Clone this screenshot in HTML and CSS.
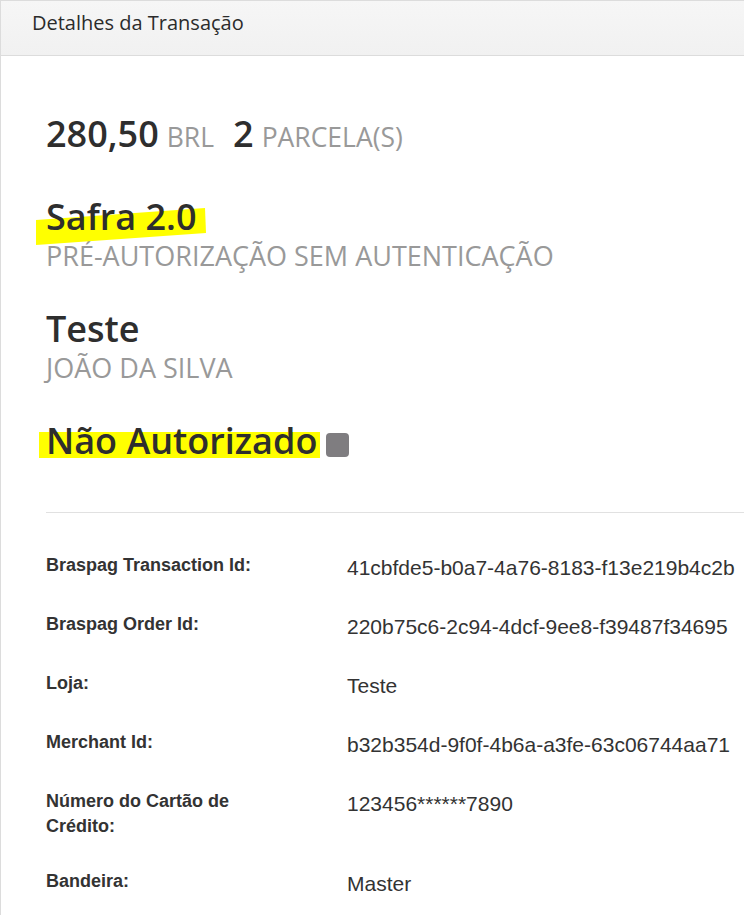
FILE: index.html
```html
<!DOCTYPE html>
<html lang="pt-BR">
<head>
<meta charset="utf-8">
<title>Detalhes da Transação</title>
<link rel="stylesheet" href="styles.css">
</head>
<body>
<div class="panel">
  <div class="panel-header">Detalhes da Transação</div>
  <div class="panel-body">
    <div class="amount">
      <span class="big">280,50</span><span class="unit">BRL</span>
      <span class="big gap">2</span><span class="unit">PARCELA(S)</span>
    </div>

    <div class="block">
      <div class="big"><span class="marked">
        <svg class="marker-safra" width="172" height="38" viewBox="0 0 172 38" aria-hidden="true"><polygon points="0,12 169,0 170,25 0,37" fill="#ffff00"/></svg>
        <span class="marked-text">Safra 2.0</span></span></div>
      <div class="sub">PRÉ-AUTORIZAÇÃO SEM AUTENTICAÇÃO</div>
    </div>

    <div class="block">
      <div class="big">Teste</div>
      <div class="sub">JOÃO DA SILVA</div>
    </div>

    <div class="block status">
      <span class="big"><span class="marked hl"><span class="marked-text">Não Autorizado</span></span></span><span class="status-box"></span>
    </div>

    <hr class="divider">

    <div class="details">
      <div class="row"><div class="label">Braspag Transaction Id:</div><div class="value">41cbfde5-b0a7-4a76-8183-f13e219b4c2b</div></div>
      <div class="row"><div class="label">Braspag Order Id:</div><div class="value">220b75c6-2c94-4dcf-9ee8-f39487f34695</div></div>
      <div class="row"><div class="label">Loja:</div><div class="value">Teste</div></div>
      <div class="row"><div class="label">Merchant Id:</div><div class="value">b32b354d-9f0f-4b6a-a3fe-63c06744aa71</div></div>
      <div class="row"><div class="label">Número do Cartão de Crédito:</div><div class="value">123456******7890</div></div>
      <div class="row"><div class="label">Bandeira:</div><div class="value">Master</div></div>
    </div>
  </div>
</div>
</body>
</html>
```

FILE: styles.css
```css
html, body {
  margin: 0;
  padding: 0;
  background: #fff;
}

body {
  font-family: "Open Sans", "Liberation Sans", sans-serif;
  color: #333;
  overflow: hidden;
}

.panel {
  border-top: 1px solid #dcdcdc;
  border-left: 1px solid #dcdcdc;
  min-height: 915px;
  box-sizing: border-box;
}

.panel-header {
  height: 55px;
  box-sizing: border-box;
  padding: 8px 31px 0;
  font-size: 20px;
  line-height: 27px;
  color: #2b2b2b;
  background: linear-gradient(#f6f6f6, #f1f1f1);
  border-bottom: 1px solid #dcdcdc;
}

.panel-body {
  padding: 57px 0 0 45px;
}

.big {
  font-size: 36px;
  font-weight: 600;
  line-height: 42px;
  color: #2e2e2e;
}

.unit {
  font-size: 26.5px;
  color: #999;
  margin-left: 8px;
}

.gap {
  margin-left: 19px;
}

.amount {
  display: flex;
  align-items: baseline;
  line-height: 42px;
  margin-bottom: 38px;
}

.block {
  margin-bottom: 37px;
}

.sub {
  font-size: 27px;
  line-height: 30px;
  margin-top: 3px;
  color: #999;
}

.marked {
  position: relative;
  display: inline-block;
}

.marked-text {
  position: relative;
}

.marker-safra {
  position: absolute;
  left: -10px;
  top: 12px;
}

.hl::before {
  content: "";
  position: absolute;
  left: -7px;
  right: -3px;
  top: 12px;
  height: 26px;
  background: #ffff00;
}

.status {
  display: flex;
  align-items: flex-end;
}

.status-box {
  display: inline-block;
  width: 23px;
  height: 24px;
  border-radius: 4px;
  background: #7f7d80;
  margin-left: 9px;
  margin-bottom: 5px;
}

.divider {
  border: 0;
  border-top: 1px solid #e1e1e1;
  margin: 50px 0 0;
}

.details {
  padding-top: 25px;
  font-family: "Liberation Sans", Arial, sans-serif;
}

.row {
  display: grid;
  grid-template-columns: 240px 1fr;
  column-gap: 61px;
  padding: 15px 0;
}

.label {
  font-weight: bold;
  font-size: 18px;
  line-height: 25px;
  color: #333;
}

.value {
  font-size: 21px;
  line-height: 29px;
  color: #333;
}
```
